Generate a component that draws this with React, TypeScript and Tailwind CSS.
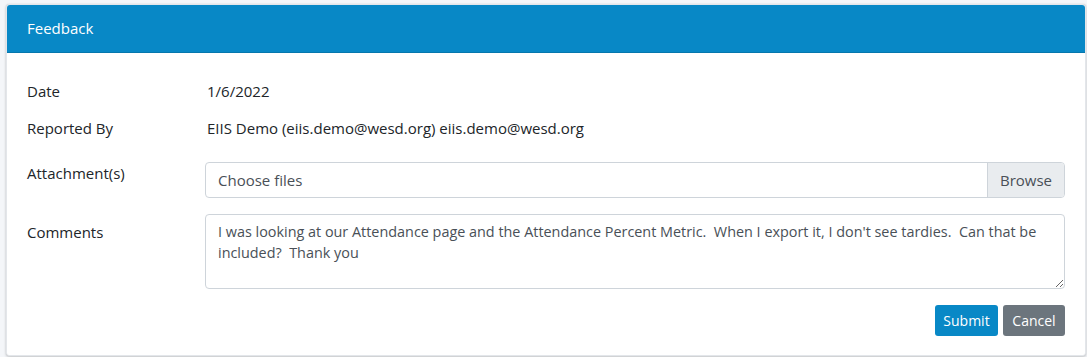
export default function App() {
  const comment =
    "I was looking at our Attendance page and the Attendance Percent Metric.  When I export it, I don't see tardies.  Can that be included?  Thank you";

  return (
    <div className="min-h-[357px] bg-[#f4f6f9] pl-[6px] pr-[1px] pt-[4px] pb-[1px] font-['Open_Sans',sans-serif] text-[15px] text-[#212529]">
      <div className="rounded-[3px] border border-[#e3e6ea] bg-white shadow-[0_0_1px_rgba(0,0,0,0.13),0_1px_3px_rgba(0,0,0,0.2)]">
        <div className="flex h-[48px] items-center rounded-t-[3px] border-b border-[#0677ad] bg-[#0888c6] px-[20px] text-white">
          Feedback
        </div>

        <div className="px-[20px] pt-[27px] pb-[19px]">
          <div className="flex leading-[22px]">
            <div className="w-[180px]">Date</div>
            <div>1/6/2022</div>
          </div>

          <div className="mt-[15px] flex leading-[22px]">
            <div className="w-[180px]">Reported By</div>
            <div>EIIS Demo (eiis.demo@wesd.org) eiis.demo@wesd.org</div>
          </div>

          <div className="mt-[23px] flex">
            <div className="w-[178px] leading-[22px]">Attachment(s)</div>
            <div className="flex h-[36px] flex-1 overflow-hidden rounded-[4px] border border-[#ced4da]">
              <div className="flex flex-1 items-center pl-[12px] text-[#495057]">
                Choose files
              </div>
              <div className="flex w-[77px] items-center justify-center border-l border-[#ced4da] bg-[#e9ecef] text-[#495057]">
                Browse
              </div>
            </div>
          </div>

          <div className="mt-[16px] flex">
            <div className="w-[178px] pt-[7px] leading-[22px]">Comments</div>
            <textarea
              className="h-[75px] flex-1 rounded-[4px] border border-[#ced4da] px-[12px] py-[6px] text-[14.4px] leading-[21px] text-[#495057] outline-none"
              defaultValue={comment}
            />
          </div>

          <div className="mt-[16px] flex justify-end gap-[5px]">
            <button className="h-[31px] w-[63px] rounded-[3px] bg-[#0888c6] text-[14px] text-white">
              Submit
            </button>
            <button className="h-[31px] w-[62px] rounded-[3px] bg-[#6c757d] text-[14px] text-white">
              Cancel
            </button>
          </div>
        </div>
      </div>
    </div>
  );
}
